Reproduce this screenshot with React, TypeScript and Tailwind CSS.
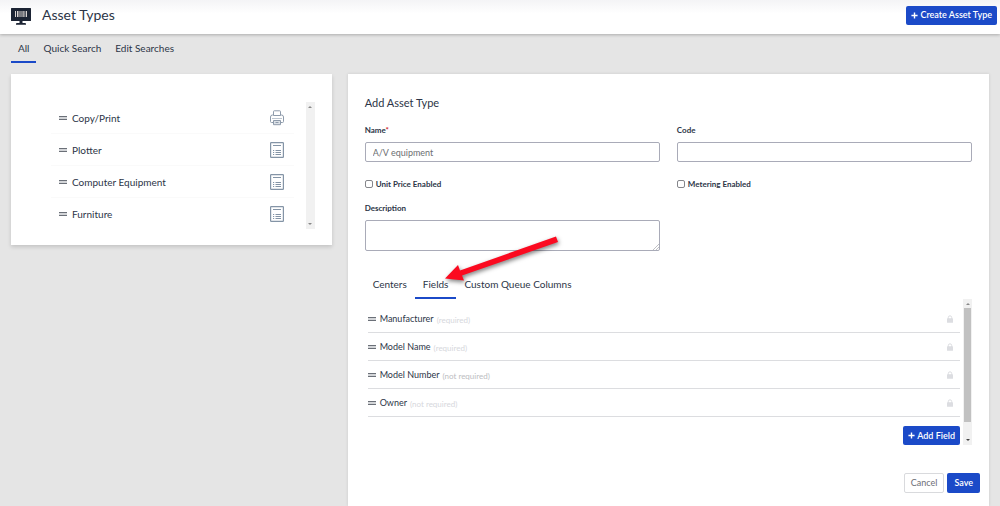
import type { ReactNode } from "react";
import clsx from "clsx";

const assetTypes = [
    { name: "Copy/Print", icon: "printer" },
    { name: "Plotter", icon: "form" },
    { name: "Computer Equipment", icon: "form" },
    { name: "Furniture", icon: "form" },
];

const fields = [
    { name: "Manufacturer", note: "(required)" },
    { name: "Model Name", note: "(required)" },
    { name: "Model Number", note: "(not required)", strong: true },
    { name: "Owner", note: "(not required)" },
];

function BarcodeMonitorIcon() {
    return (
        <svg viewBox="0 0 20 18" className="h-[18px] w-5 shrink-0" aria-hidden="true">
            <path fill="#1c2434" d="M.6 0h18.800q.6 0 .6.600v11.800q0 .6-.6.600H11.500v2H14q1 0 1 1v.7H5V16q0-1 1-1h2.500v-2H.6q-.6 0-.6-.6V.6Q0 0 .6 0z" />
            <path fill="#d9d3d1" d="M4 3h1v6H4zM6 3h1.500v6H6zM8.500 3h1v6h-1zM10.500 3h1v6h-1zM12.300 3h1.200v6h-1.200zM14.700 3h1.300v6h-1.300z" />
        </svg>
    );
}

function PrinterIcon() {
    return (
        <svg viewBox="0 0 14 16" className="h-4 w-3.5" fill="none" stroke="#8e9bab" aria-hidden="true">
            <path d="M3 12.500H1.500q-1 0-1-1V7q0-2 2-2h9q2 0 2 2v4.500q0 1-1 1H11" />
            <path fill="#fff" d="M3.500 5.500V1.500q0-.7.700-.7h5.600q.7 0 .7.700v4z" />
            <path stroke="#bcc5cf" d="M2 8.500h10" />
            <path fill="#dce1e7" d="M3.500 10.500h7v4.200h-7z" />
            <path d="M5.500 12.500h3" />
        </svg>
    );
}

function FormIcon() {
    return (
        <svg viewBox="0 0 14 16" className="h-4 w-3.5" fill="none" stroke="#8494a6" aria-hidden="true">
            <rect x=".6" y=".6" width="12.800" height="14.800" rx=".6" strokeWidth="1.200" />
            <path d="M3 3.500h8M5.500 8.500H11M5.500 10.500H11M5.500 12.500H11" />
            <path d="M3 8.500h1.200M3 10.500h1.200M3 12.500h1.200" />
        </svg>
    );
}

function LockIcon() {
    return (
        <svg viewBox="0 0 6 8" className="h-2 w-1.5" aria-hidden="true">
            <path fill="none" stroke="#dcdde1" d="M1.300 4V2.500a1.700 1.700 0 0 1 3.400 0V4" />
            <rect y="3.300" width="6" height="4.400" rx=".5" fill="#dcdde1" />
        </svg>
    );
}

function PlusIcon() {
    return (
        <svg viewBox="0 0 8 8" className="size-[7px]" stroke="currentColor" strokeWidth="1.600" aria-hidden="true">
            <path d="M4 .5v7M.5 4h7" />
        </svg>
    );
}

function Grip() {
    return <span className="h-1 w-2 shrink-0 border-y border-[#6b7078] bg-[#d3d5d8]" />;
}

function ScrollTrack({ thumb }: { thumb?: boolean }) {
    return (
        <div className="flex w-[9px] shrink-0 flex-col items-center justify-between bg-[#f1f1f1] py-1" aria-hidden="true">
            <svg viewBox="0 0 4 2" className="h-0.5 w-1 fill-[#888]">
                <path d="M0 2 2 0l2 2z" />
            </svg>
            {thumb && <div className="mt-[3px] mb-[17px] w-[7px] flex-1 bg-[#c1c1c1]" />}
            <svg viewBox="0 0 4 2" className={clsx("h-0.5 w-1", thumb ? "fill-[#444]" : "fill-[#888]")}>
                <path d="m0 0 2 2 2-2z" />
            </svg>
        </div>
    );
}

function Tab({ active, compact, children }: { active?: boolean; compact?: boolean; children: ReactNode }) {
    return (
        <button
            type="button"
            role="tab"
            aria-selected={!!active}
            className={clsx(
                "h-[29px] border-b-2 text-[10px] leading-4",
                compact ? "px-[7px]" : "px-2",
                active ? "border-[#1b4ac8]" : "border-transparent"
            )}
        >
            {children}
        </button>
    );
}

function Checkbox({ id, label }: { id: string; label: string }) {
    return (
        <div className="flex h-3 items-center gap-[3px]">
            <input id={id} type="checkbox" className="size-2 appearance-none rounded-[2px] border border-[#85868b] bg-white" />
            <label htmlFor={id} className="text-[8px] leading-3 font-bold">{label}</label>
        </div>
    );
}

export default function App() {
    return (
        <div className="flex min-h-screen flex-col bg-[#e5e5e5] font-[Lato,sans-serif] text-[#2c3547]">
            <header className="flex h-[34px] items-center justify-between bg-linear-to-b from-[#f4f4f6] to-white to-40% pr-[3px] pl-[11px] shadow-[0_1px_3px_rgba(0,0,0,0.25)]">
                <div className="flex items-center gap-[11px]">
                    <BarcodeMonitorIcon />
                    <h1 className="pb-1 text-[14px] leading-5">Asset Types</h1>
                </div>
                <button type="button" className="mb-1 flex h-[19px] items-center gap-0.5 rounded-[2px] bg-[#1b4ac8] px-[5px] text-[9px] font-semibold text-white">
                    <PlusIcon />
                    Create Asset Type
                </button>
            </header>

            <nav role="tablist" className="flex px-[11px]">
                <Tab compact active>All</Tab>
                <Tab compact>Quick Search</Tab>
                <Tab compact>Edit Searches</Tab>
            </nav>

            <main className="mt-[11px] grid flex-1 grid-cols-[1fr_2fr] gap-4 px-[11px]">
                <section className="flex self-start bg-white pt-7 pr-[17px] pb-4 pl-10 shadow-[0_2px_4px_rgba(0,0,0,0.15)]">
                    <ul className="mr-3 flex-1">
                        {assetTypes.map((type) => (
                            <li key={type.name} className="flex h-8 items-center border-b border-[#fafafa] pr-[10px] pl-2 last:h-[31px] last:border-0">
                                <Grip />
                                <span className="ml-[5px] flex-1 text-[10px] leading-4">{type.name}</span>
                                {type.icon === "printer" ? <PrinterIcon /> : <FormIcon />}
                            </li>
                        ))}
                    </ul>
                    <ScrollTrack />
                </section>

                <section className="relative bg-white px-[17px] pt-[21px] pb-3 shadow-[0_0_3px_rgba(0,0,0,0.12)]">
                    <h2 className="text-[11px] leading-4">Add Asset Type</h2>

                    <form className="mt-[13px] grid grid-cols-2 gap-x-[17px]" onSubmit={(e) => e.preventDefault()}>
                        <div>
                            <label htmlFor="name" className="block text-[8px] leading-3 font-bold">
                                Name<span className="text-[#d0202a]">*</span>
                            </label>
                            <input id="name" defaultValue="A/V equipment" className="mt-[6px] block h-5 w-full rounded-[2px] border border-[#a9abb8] px-[7px] text-[9px] text-[#6c6e72]" />
                        </div>
                        <div>
                            <label htmlFor="code" className="block text-[8px] leading-3 font-bold">Code</label>
                            <input id="code" className="mt-[6px] block h-5 w-full rounded-[2px] border border-[#a9abb8] px-[7px] text-[9px]" />
                        </div>
                        <div className="mt-4">
                            <Checkbox id="unit-price" label="Unit Price Enabled" />
                        </div>
                        <div className="mt-4">
                            <Checkbox id="metering" label="Metering Enabled" />
                        </div>
                        <div className="mt-3">
                            <label htmlFor="description" className="block text-[8px] leading-3 font-bold">Description</label>
                            <div className="relative mt-[6px]">
                                <textarea id="description" className="block h-[31px] w-full resize-none rounded-[2px] border border-[#a9abb8] px-[7px] py-1 text-[9px]" />
                                <svg viewBox="0 0 6 6" className="absolute right-px bottom-px size-1.5" stroke="#96979d" strokeWidth=".6" aria-hidden="true">
                                    <path d="M0 6 6 0M3 6l3-3" />
                                </svg>
                            </div>
                        </div>
                    </form>

                    <div role="tablist" className="mt-[19px] flex">
                        <Tab>Centers</Tab>
                        <Tab active>Fields</Tab>
                        <Tab>Custom Queue Columns</Tab>
                    </div>

                    <div className="flex pl-[3px]">
                        <div className="mr-[3px] flex-1">
                            <ul className="pt-[6px]">
                                {fields.map((field) => (
                                    <li key={field.name} className="flex h-7 items-center border-b border-[#dcdde0] pr-[7px]">
                                        <Grip />
                                        <span className="ml-1 text-[9px] leading-3">{field.name}</span>
                                        <span className={clsx("ml-[3px] flex-1 pt-0.5 text-[8px] leading-3", field.strong ? "text-[#bcbdc1]" : "text-[#d6d7dc]")}>{field.note}</span>
                                        <LockIcon />
                                    </li>
                                ))}
                            </ul>
                            <button type="button" className="mt-[9px] ml-auto flex h-[19px] items-center gap-0.5 rounded-[2px] bg-[#1b4ac8] px-[5px] text-[9px] font-semibold text-white">
                                <PlusIcon />
                                Add Field
                            </button>
                        </div>
                        <ScrollTrack thumb />
                    </div>

                    <div className="mt-7 -mr-2 flex justify-end gap-[3px]">
                        <button type="button" className="h-5 rounded-[2px] border border-[#d9dadd] px-1.5 text-[9px] text-[#6c6e76]">Cancel</button>
                        <button type="button" className="h-5 rounded-[2px] bg-[#1b4ac8] px-[7px] text-[9px] font-semibold text-white">Save</button>
                    </div>

                    <svg viewBox="0 0 120 56" className="pointer-events-none absolute top-[159px] left-[94px] h-14 w-[120px] drop-shadow-[1px_2px_2px_rgba(0,0,0,0.5)]" aria-hidden="true">
                        <path fill="#fb0a20" d="M3 45.500 16 32l2 5.500L114 3.500l2 5.500L20 42.500l2 5z" />
                    </svg>
                </section>
            </main>
        </div>
    );
}
